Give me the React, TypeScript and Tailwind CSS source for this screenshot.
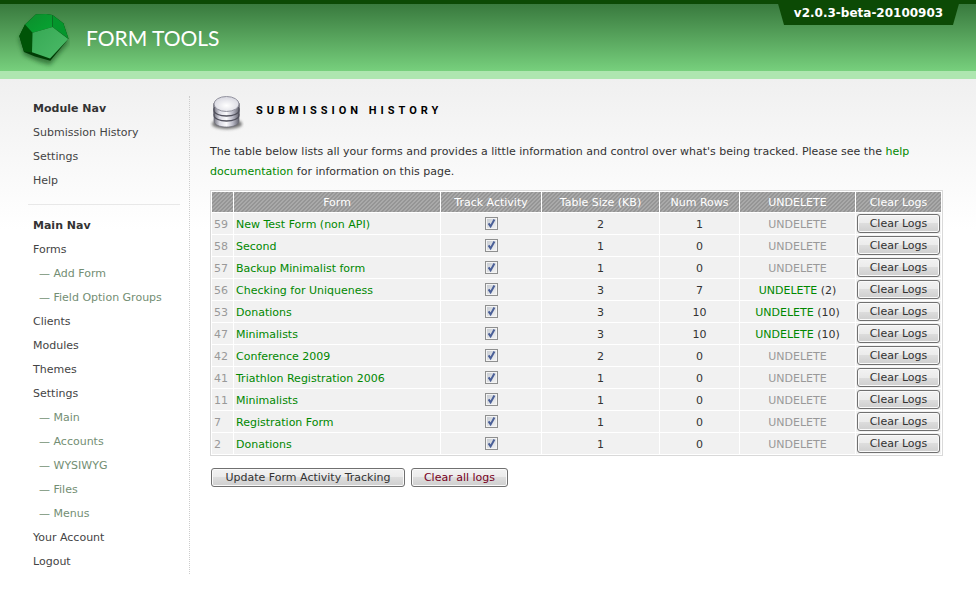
type NavItem = { label: string; sub?: boolean };

const moduleNav: NavItem[] = [
  { label: "Submission History" },
  { label: "Settings" },
  { label: "Help" },
];

const mainNav: NavItem[] = [
  { label: "Forms" },
  { label: "Add Form", sub: true },
  { label: "Field Option Groups", sub: true },
  { label: "Clients" },
  { label: "Modules" },
  { label: "Themes" },
  { label: "Settings" },
  { label: "Main", sub: true },
  { label: "Accounts", sub: true },
  { label: "WYSIWYG", sub: true },
  { label: "Files", sub: true },
  { label: "Menus", sub: true },
  { label: "Your Account" },
  { label: "Logout" },
];

const forms = [
  { id: 59, name: "New Test Form (non API)", size: 2, rows: 1, deleted: 0 },
  { id: 58, name: "Second", size: 1, rows: 0, deleted: 0 },
  { id: 57, name: "Backup Minimalist form", size: 1, rows: 0, deleted: 0 },
  { id: 56, name: "Checking for Uniqueness", size: 3, rows: 7, deleted: 2 },
  { id: 53, name: "Donations", size: 3, rows: 10, deleted: 10 },
  { id: 47, name: "Minimalists", size: 3, rows: 10, deleted: 10 },
  { id: 42, name: "Conference 2009", size: 2, rows: 0, deleted: 0 },
  { id: 41, name: "Triathlon Registration 2006", size: 1, rows: 0, deleted: 0 },
  { id: 11, name: "Minimalists", size: 1, rows: 0, deleted: 0 },
  { id: 7, name: "Registration Form", size: 1, rows: 0, deleted: 0 },
  { id: 2, name: "Donations", size: 1, rows: 0, deleted: 0 },
];

function LogoMark() {
  return (
    <svg width="60" height="60" viewBox="0 0 60 60" aria-hidden="true">
      <defs>
        <filter id="logoShadow" x="-20%" y="-20%" width="140%" height="150%">
          <feGaussianBlur stdDeviation="2" />
        </filter>
        <linearGradient id="logoTop" x1="0" y1="0" x2="1" y2="1">
          <stop offset="0" stopColor="#0c8c2c" />
          <stop offset="1" stopColor="#06a632" />
        </linearGradient>
        <linearGradient id="logoFront" x1="0" y1="0" x2="1" y2="1">
          <stop offset="0" stopColor="#36a854" />
          <stop offset="1" stopColor="#4cbb68" />
        </linearGradient>
      </defs>
      <path d="M9 25 15 15 26 4 42 5 53 13 58 29 40 51 29 48 14 41Z" fill="#134d1a" opacity=".6" filter="url(#logoShadow)" transform="translate(0 4)" />
      <path d="M26 4.3 36 4 42.5 5 53.3 13.3 58.5 28.7 40.3 50.7 25 46.5 14 42 9.3 26 15 14.5Z" fill="#003d05" />
      <path d="M9.3 26 15 14.5 22.5 22.7 22 42.3 14 41.5Z" fill="#005407" />
      <path d="M15 14.5 26 4.3 36 4 42.5 5 42.5 17 22.5 22.7Z" fill="url(#logoTop)" />
      <path d="M42.5 5 53.3 13.3 58.5 28.7 42.5 17Z" fill="#04962c" />
      <path d="M42.5 5V17" stroke="#0a6e22" strokeWidth=".8" />
      <path d="M22.5 22.7 42.5 17 58.3 29 40 48.5 22 42.3Z" fill="url(#logoFront)" />
    </svg>
  );
}

function DatabaseIcon() {
  return (
    <svg width="34" height="36" viewBox="0 0 34 36" aria-hidden="true">
      <defs>
        <linearGradient id="dbSide" x1="0" y1="0" x2="1" y2="0">
          <stop offset="0" stopColor="#74747f" />
          <stop offset=".22" stopColor="#d9d9e2" />
          <stop offset=".5" stopColor="#fafafc" />
          <stop offset=".75" stopColor="#b9b9c6" />
          <stop offset="1" stopColor="#64646f" />
        </linearGradient>
        <radialGradient id="dbTop" cx=".5" cy=".6" r=".6">
          <stop offset="0" stopColor="#ffffff" />
          <stop offset="1" stopColor="#d6d6df" />
        </radialGradient>
        <filter id="dbBlur" x="-20%" y="-40%" width="140%" height="180%">
          <feGaussianBlur stdDeviation="1.4" />
        </filter>
      </defs>
      <ellipse cx="17" cy="28" rx="15" ry="5" fill="#444" opacity=".75" filter="url(#dbBlur)" />
      <path d="M4 18v7c0 8 25 8 25 0v-7Z" fill="url(#dbSide)" stroke="#686874" strokeWidth=".7" />
      <path d="M4 13v6c0 8 25 8 25 0v-6Z" fill="url(#dbSide)" stroke="#50505c" strokeWidth="1.3" />
      <path d="M4 8v6c0 8 25 8 25 0V8Z" fill="url(#dbSide)" stroke="#50505c" strokeWidth="1.3" />
      <ellipse cx="16.5" cy="8" rx="12.5" ry="7.5" fill="url(#dbTop)" stroke="#92929e" strokeWidth="1" />
    </svg>
  );
}

function NavList({ items }: { items: NavItem[] }) {
  return (
    <ul>
      {items.map((item) => (
        <li key={item.label} className={item.sub ? "pl-[6px] text-[#738e73]" : "text-[#444444]"}>
          {item.sub && "— "}
          <a href="#">{item.label}</a>
        </li>
      ))}
    </ul>
  );
}

function Button({ children, danger, width }: { children: string; danger?: boolean; width: string }) {
  return (
    <button
      type="button"
      className={`block h-[19px] rounded-[3px] border border-[#707070] bg-[linear-gradient(#f2f2f2,#ebebeb_50%,#dddddd_50%,#cfcfcf)] pt-px text-center leading-4 whitespace-nowrap shadow-[inset_0_0_0_1px_#fafafa] ${width} ${
        danger ? "text-[#770022]" : "text-[#333333]"
      }`}
    >
      {children}
    </button>
  );
}

function TrackBox({ name }: { name: string }) {
  return (
    <span className="relative mx-auto block size-[13px]">
      <input
        type="checkbox"
        defaultChecked
        aria-label={`Track activity for ${name}`}
        className="peer block size-[13px] appearance-none border border-[#8e8f8f] bg-linear-to-br from-[#c4c9d0] to-[#f6f6f6] shadow-[inset_0_0_0_1px_#f4f4f4]"
      />
      <svg
        viewBox="0 0 13 13"
        className="pointer-events-none absolute inset-0 hidden size-[13px] peer-checked:block"
        aria-hidden="true"
      >
        <path d="M3.6 6.4 5.6 9.4 9.4 2.6" fill="none" stroke="#4a5f97" strokeWidth="2" />
      </svg>
    </span>
  );
}

const columns = [
  { label: "", width: "w-[21px]" },
  { label: "Form", width: "" },
  { label: "Track Activity", width: "w-[100px]" },
  { label: "Table Size (KB)", width: "w-[117px]" },
  { label: "Num Rows", width: "w-[79px]" },
  { label: "UNDELETE", width: "w-[115px]" },
  { label: "Clear Logs", width: "w-[85px]" },
];

export default function App() {
  return (
    <div className="min-h-screen bg-white font-['Verdana','DejaVu_Sans',sans-serif] text-[11px] text-[#333333]">
      <header className="relative flex h-[79px] items-start border-t-4 border-b-8 border-t-[#0c4a05] border-b-[#aee6b0] bg-linear-to-b from-[#397a3e] to-[#77d07d] bg-origin-padding pl-[10px]">
        <a href="#" className="flex items-start" aria-label="Form Tools">
          <span className="mt-[6px] block">
            <LogoMark />
          </span>
          <span className="mt-[18px] ml-4 font-['Lato',sans-serif] text-[21px] leading-8 text-white">
            FORM TOOLS
          </span>
        </a>
        <div className="absolute -top-1 right-4 h-[25px] w-[183px] bg-[#0c4a05] text-center text-xs font-bold leading-[26px] text-white [clip-path:polygon(0_0,100%_0,176px_100%,7px_100%)]">
          v2.0.3-beta-20100903
        </div>
      </header>

      <div className="flex bg-linear-to-b from-[#f0f0f0] to-white to-[150px] pt-[17px]">
        <nav className="ml-7 w-[162px] shrink-0 self-start border-r border-dotted border-[#cccccc] pr-[9px] leading-6">
          <div className="pt-px pl-[5px]">
            <h2 className="font-bold text-[#333333]">Module Nav</h2>
            <NavList items={moduleNav} />
          </div>
          <hr className="mt-[11px] mb-2 border-[#e8e8e8]" />
          <div className="pt-px pl-[5px]">
            <h2 className="font-bold text-[#333333]">Main Nav</h2>
            <NavList items={mainNav} />
          </div>
        </nav>

        <main className="min-w-0 flex-1 pr-[33px] pl-5">
          <div className="flex h-9 items-center">
            <DatabaseIcon />
            <h1 className="ml-3 pb-[6px] font-['Roboto','Liberation_Sans',sans-serif] text-[11px] font-bold tracking-[4px] text-black">
              SUBMISSION HISTORY
            </h1>
          </div>

          <p className="mt-[10px] leading-5">
            The table below lists all your forms and provides a little information and control over what's being
            tracked. Please see the{" "}
            <a href="#" className="text-[#008800]">
              help documentation
            </a>{" "}
            for information on this page.
          </p>

          <table className="mt-2 w-full table-fixed border-separate border-spacing-[1px] border border-[#d9d9d9] bg-white">
            <thead>
              <tr className="h-5">
                {columns.map((c) => (
                  <th
                    key={c.label}
                    scope="col"
                    className={`bg-[linear-gradient(135deg,#a9a9a9_37%,#959595_37%,#959595_50%,#a9a9a9_50%,#a9a9a9_87%,#959595_87%)] bg-[length:4px_4px] p-0 pt-[2px] leading-4 font-normal whitespace-nowrap text-white ${c.width}`}
                  >
                    {c.label}
                  </th>
                ))}
              </tr>
            </thead>
            <tbody>
              {forms.map((f) => (
                <tr key={f.id} className="h-[21px] bg-[#f1f1f1] text-center leading-4">
                  <td className="p-0 pt-[2px] pl-[2px] text-left text-[#999999]">{f.id}</td>
                  <td className="p-0 pt-[2px] pl-[2px] text-left">
                    <a href="#" className="text-[#008800]">
                      {f.name}
                    </a>
                  </td>
                  <td className="p-0">
                    <TrackBox name={f.name} />
                  </td>
                  <td className="p-0 pt-[2px]">{f.size}</td>
                  <td className="p-0 pt-[2px]">{f.rows}</td>
                  <td className="p-0 pt-[2px]">
                    {f.deleted > 0 ? (
                      <>
                        <a href="#" className="text-[#008800]">
                          UNDELETE
                        </a>{" "}
                        ({f.deleted})
                      </>
                    ) : (
                      <span className="text-[#999999]">UNDELETE</span>
                    )}
                  </td>
                  <td className="px-px py-0">
                    <Button width="w-full">Clear Logs</Button>
                  </td>
                </tr>
              ))}
            </tbody>
          </table>

          <div className="mt-3 flex gap-[6px] pl-px">
            <Button width="w-[194px]">Update Form Activity Tracking</Button>
            <Button danger width="w-[97px]">
              Clear all logs
            </Button>
          </div>
        </main>
      </div>
    </div>
  );
}
